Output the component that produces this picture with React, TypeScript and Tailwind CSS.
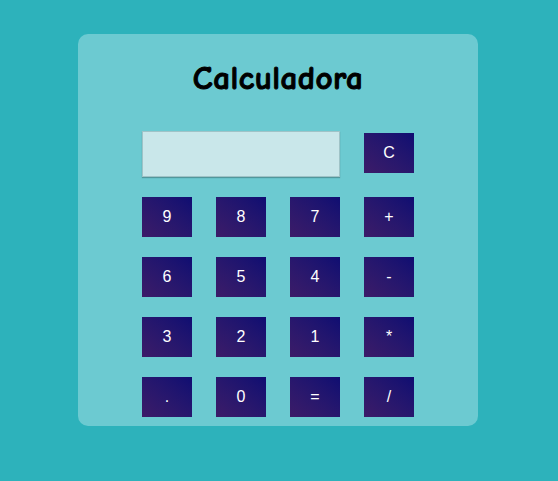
const keys = ["9", "8", "7", "+", "6", "5", "4", "-", "3", "2", "1", "*", ".", "0", "=", "/"];

function Key({ label }: { label: string }) {
  return (
    <button className="w-[50px] h-10 self-center bg-gradient-to-tr from-[#3c1b68] to-[#0f0d72] text-white text-base font-['Liberation_Sans',Arial,sans-serif]">
      {label}
    </button>
  );
}

export default function App() {
  return (
    <div className="w-full min-h-[481px] bg-[#2db2bb] pt-[34px]">
      <div className="w-[400px] h-[392px] ml-[78px] rounded-[10px] bg-[#6ccad1] flex flex-col items-center pt-6">
        <h1 className="text-[33px] leading-[40px] font-bold text-black [-webkit-text-stroke:1px_black] tracking-[0.5px] font-['Comic_Sans_MS','Comic_Neue',cursive,'DejaVu_Sans',sans-serif]">
          Calculadora
        </h1>
        <div className="mt-[33px] grid grid-cols-[50px_50px_50px_50px] gap-x-6 gap-y-5">
          <div className="col-span-3 h-[46px] bg-[#c9e7ea] border border-[#9fc3c7] shadow-[0_1px_1px_rgba(0,0,0,0.25)]" />
          <div className="self-start mt-0.5">
            <Key label="C" />
          </div>
          {keys.map((k) => (
            <Key key={k} label={k} />
          ))}
        </div>
      </div>
    </div>
  );
}
